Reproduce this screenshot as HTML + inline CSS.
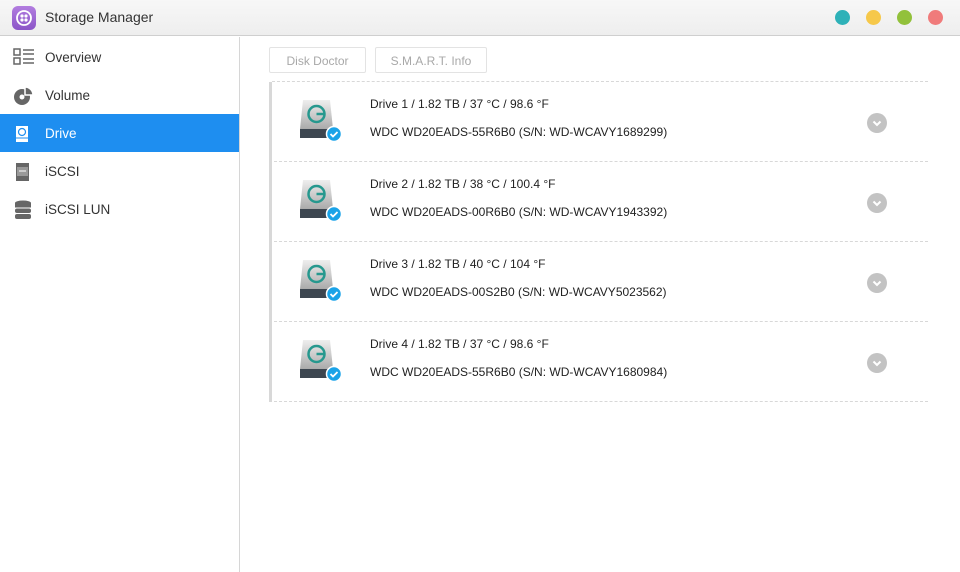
<!DOCTYPE html>
<html><head><meta charset="utf-8"><style>
*{margin:0;padding:0;box-sizing:border-box}
body{width:960px;height:572px;background:#fff;font-family:"Liberation Sans",sans-serif;position:relative;overflow:hidden;color:#333}
.title{position:absolute;left:0;top:0;width:960px;height:36px;background:linear-gradient(#f7f7f7,#eeeeee);border-bottom:1px solid #cfcfcf}
.title .logo{position:absolute;left:12px;top:6px;width:24px;height:24px;border-radius:6px;background:linear-gradient(#b27de0,#8b55c8)}
.title .t{position:absolute;left:45px;top:9px;font-size:14px;color:#333}
.dot{position:absolute;top:10px;width:15px;height:15px;border-radius:50%}
.side{position:absolute;left:0;top:37px;width:240px;height:535px;border-right:1px solid #d6d6d6}
.item{position:absolute;left:0;width:239px;height:38px;font-size:13.5px;line-height:40px;padding-left:45px;color:#333}
.item.act{background:#1e8ef0;color:#fff}
.item svg{position:absolute;left:13px;top:10px}
.btn{position:absolute;top:47px;height:26px;border:1px solid #e3e3e3;border-radius:2px;color:#a8a8a8;font-size:12px;line-height:26px;text-align:center}
.row{position:absolute;left:269px;width:659px;height:80px;border-left:3px solid #d8d8d8;border-bottom:1px dashed #d8d8d8}
.row .a{position:absolute;left:98px;top:15px;font-size:12px;color:#222}
.row .b{position:absolute;left:98px;top:43px;font-size:12px;color:#222}
.row svg.d{position:absolute;left:26px;top:16px}
.chev{position:absolute;left:595px;top:31px;width:20px;height:20px;border-radius:50%;background:#c3c3c3}
</style></head><body>
<div class="title"><div class="logo"><svg width="24" height="24"><circle cx="12" cy="12" r="7" fill="none" stroke="#fff" stroke-width="1.8"/><circle cx="10" cy="10" r="1.6" fill="#fff"/><circle cx="14" cy="10" r="1.6" fill="#fff"/><circle cx="10" cy="14" r="1.6" fill="#fff"/><circle cx="14" cy="14" r="1.6" fill="#fff"/></svg></div><div class="t">Storage Manager</div>
<div class="dot" style="left:835px;background:#2eb1b8"></div><div class="dot" style="left:866px;background:#f6c84a"></div><div class="dot" style="left:897px;background:#92c13b"></div><div class="dot" style="left:928px;background:#f07b7b"></div></div>
<div class="side">
<div class="item" style="top:1px"><svg width="22" height="18"><rect x="1" y="1" width="6" height="6" fill="none" stroke="#666" stroke-width="1.5"/><rect x="1" y="10" width="6" height="6" fill="none" stroke="#666" stroke-width="1.5"/><path d="M10 2h11M10 6h11M10 11h11M10 15h11" stroke="#666" stroke-width="1.5"/></svg>Overview</div>
<div class="item" style="top:39px"><svg width="22" height="20"><circle cx="9" cy="11" r="8" fill="#666"/><circle cx="9" cy="11" r="2.5" fill="#fff"/><path d="M12 1 A8 8 0 0 1 20 9 L12 9Z" fill="#666" stroke="#fff" stroke-width="1.5"/></svg>Volume</div>
<div class="item act" style="top:77px"><svg width="20" height="20"><path d="M3 2h12v16H3z" fill="#fff"/><path d="M3 14h12" stroke="#1e8ef0"/><circle cx="9" cy="8" r="3.5" fill="none" stroke="#1e8ef0" stroke-width="1.2"/></svg>Drive</div>
<div class="item" style="top:115px"><svg width="20" height="20"><path d="M3 1h13v18H3z" fill="#666"/><path d="M4 5h11v9H4z" fill="#999"/><path d="M6 9h7" stroke="#fff"/></svg>iSCSI</div>
<div class="item" style="top:153px"><svg width="20" height="20"><ellipse cx="10" cy="3" rx="8" ry="2.5" fill="#666"/><rect x="2" y="3" width="16" height="4.5" fill="#666"/><rect x="2" y="8.5" width="16" height="4.5" rx="2" fill="#666"/><rect x="2" y="14" width="16" height="5" rx="2" fill="#666"/></svg>iSCSI LUN</div>
</div>
<div class="btn" style="left:269px;width:97px">Disk Doctor</div>
<div class="btn" style="left:375px;width:112px">S.M.A.R.T. Info</div>
<div style="position:absolute;left:272px;top:81px;width:656px;border-top:1px dashed #d8d8d8"></div>
<svg width="0" height="0" style="position:absolute"><defs><linearGradient id="g" x1="0" y1="0" x2="0" y2="1"><stop offset="0" stop-color="#eee"/><stop offset="1" stop-color="#aaa"/></linearGradient><g id="dr"><path d="M5 2h27l3 29H2z" fill="url(#g)"/><rect x="2" y="31" width="33" height="9" fill="#3d4650"/><circle cx="18.5" cy="16" r="8" fill="none" stroke="#26988e" stroke-width="2.5"/><path d="M18.5 16h9" stroke="#26988e" stroke-width="2.5"/><circle cx="36" cy="36" r="7.5" fill="#1aa3e8" stroke="#fff" stroke-width="1.5"/><path d="M32.5 36l2.5 2.5 4.5-4.5" stroke="#fff" stroke-width="1.8" fill="none"/></g></defs></svg>
<div class="row" style="top:82px"><svg class="d" width="46" height="46"><use href="#dr"/></svg><div class="a">Drive 1 / 1.82 TB / 37 °C / 98.6 °F</div><div class="b">WDC WD20EADS-55R6B0 (S/N: WD-WCAVY1689299)</div><div class="chev"><svg width="20" height="20"><path d="M6.5 8.5l3.5 3.5 3.5-3.5" stroke="#fff" stroke-width="2" fill="none"/></svg></div></div>
<div class="row" style="top:162px"><svg class="d" width="46" height="46"><use href="#dr"/></svg><div class="a">Drive 2 / 1.82 TB / 38 °C / 100.4 °F</div><div class="b">WDC WD20EADS-00R6B0 (S/N: WD-WCAVY1943392)</div><div class="chev"><svg width="20" height="20"><path d="M6.5 8.5l3.5 3.5 3.5-3.5" stroke="#fff" stroke-width="2" fill="none"/></svg></div></div>
<div class="row" style="top:242px"><svg class="d" width="46" height="46"><use href="#dr"/></svg><div class="a">Drive 3 / 1.82 TB / 40 °C / 104 °F</div><div class="b">WDC WD20EADS-00S2B0 (S/N: WD-WCAVY5023562)</div><div class="chev"><svg width="20" height="20"><path d="M6.5 8.5l3.5 3.5 3.5-3.5" stroke="#fff" stroke-width="2" fill="none"/></svg></div></div>
<div class="row" style="top:322px"><svg class="d" width="46" height="46"><use href="#dr"/></svg><div class="a">Drive 4 / 1.82 TB / 37 °C / 98.6 °F</div><div class="b">WDC WD20EADS-55R6B0 (S/N: WD-WCAVY1680984)</div><div class="chev"><svg width="20" height="20"><path d="M6.5 8.5l3.5 3.5 3.5-3.5" stroke="#fff" stroke-width="2" fill="none"/></svg></div></div>
</body></html>
